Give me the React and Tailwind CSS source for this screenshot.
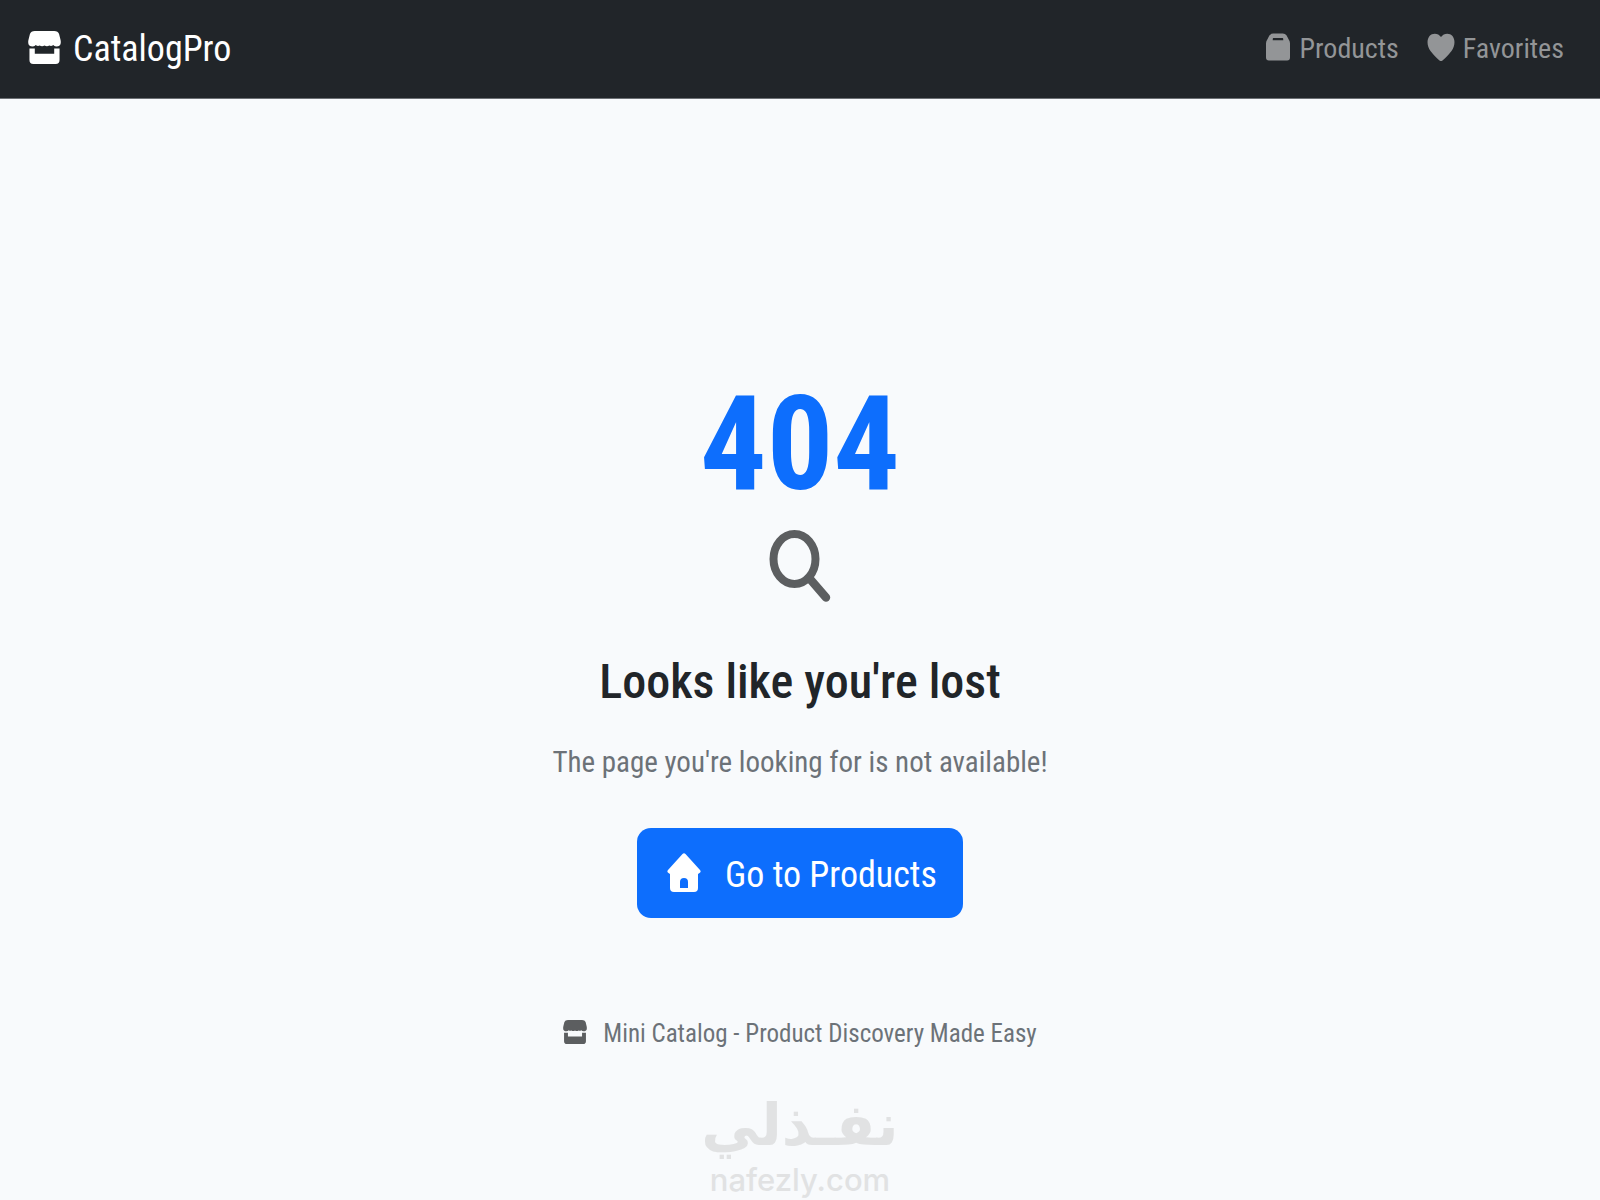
const Shop = ({ className }) => (
  <svg viewBox="0 0 34 34" className={className} fill="currentColor" aria-hidden="true">
    <path d="M7 0h20q4 0 5 3l1.500 6q1.500 7-4.500 7-2 0-3-1.500-2 1.500-4 .5-2.500 1.500-5 0-2.500 1.500-5 0-2 1-4-.5-1 1.500-3 1.500-6 0-4.500-7L2 3q1-3 5-3Z" />
    <path d="M1.500 18H7v5.500h20V18h5.500v12q0 4-4 4h-23q-4 0-4-4Z" />
  </svg>
);

const Bag = ({ className }) => (
  <svg viewBox="0 0 25 28" className={className} fill="currentColor" aria-hidden="true">
    <path fillRule="evenodd" d="M7.500 0h10q2.500 0 4 2l2 4q1.500 2 1.500 4v15q0 3-3 3H3q-3 0-3-3V10q0-2 1.500-4l2-4q1.500-2 4-2Zm0 4.500q-.5 0-.5 2.500h11q0-2.500-.5-2.500Z" />
  </svg>
);

const Heart = ({ className }) => (
  <svg viewBox="0 0 27 28" className={className} fill="currentColor" aria-hidden="true">
    <path d="M13.500 4C16 0 22-.5 25 3c3 4 2.500 10-1 15-3 4-6 7-9 9.500q-1.500 1-3 0C9 25 6 22 3 18-.5 13-1 7 2 3c3-3.500 9-3 11.500 1Z" />
  </svg>
);

const House = ({ className }) => (
  <svg viewBox="0 0 34 40" className={className} fill="currentColor" aria-hidden="true">
    <path fillRule="evenodd" d="M15.500 1q1.500-1.500 3 0L33 17q1.500 2-.5 3L31 21v14q0 4-4 4H7q-4 0-4-4V21l-1.500-1q-2-1-.5-3ZM13 35h8v-6q0-4-4-4t-4 4Z" />
  </svg>
);

const Magnifier = ({ className }) => (
  <svg viewBox="0 0 62 72" className={className} fill="none" stroke="currentColor" aria-hidden="true">
    <ellipse cx="25.500" cy="29" rx="21" ry="25" strokeWidth="8" />
    <path d="M41 49 57 67.500" strokeWidth="8.500" strokeLinecap="round" />
  </svg>
);

export default function App() {
  return (
    <div className="flex min-h-screen flex-col bg-[#f8fafc] font-['Roboto_Condensed','Open_Sans',sans-serif] text-[#212529]">
      <header className="flex items-center justify-between border-b border-[#6c7074] bg-[#212529] px-7 py-6">
        <a href="#home" className="flex items-center gap-3 text-[36px] leading-[50px] text-white">
          <Shop className="mb-1 size-[33px]" />
          CatalogPro
        </a>
        <nav className="flex items-center gap-7 pr-2 text-[28px] leading-10 text-[#939597]">
          <a href="#products" className="flex items-center gap-2.5">
            <Bag className="mb-1 h-7 w-6" />
            Products
          </a>
          <a href="#favorites" className="flex items-center gap-2">
            <Heart className="mb-1 h-7 w-7" />
            Favorites
          </a>
        </nav>
      </header>

      <main className="flex flex-1 flex-col items-center justify-end text-center">
        <h1 className="text-[132px] leading-[132px] font-bold text-[#0d6efd]">404</h1>
        <Magnifier className="mt-5 h-18 w-16 text-[#5c5e60]" />
        <h2 className="mt-13 text-[48px] leading-14 font-medium">Looks like you're lost</h2>
        <p className="mt-8 text-[29px] leading-10 text-[#6c7278]">The page you're looking for is not available!</p>
        <a
          href="#products"
          className="mt-[46px] flex h-[90px] items-center gap-6 rounded-[14px] bg-[#0d6efd] pr-[26px] pl-[30px] text-[36px] leading-10 text-white"
        >
          <House className="h-10 w-[34px]" />
          <span className="pt-1">Go to Products</span>
        </a>
      </main>

      <footer className="flex flex-col items-center pt-24">
        <p className="flex items-center gap-4 text-[25px] leading-10 text-[#6c7278]">
          <Shop className="mb-1 size-6 text-[#5c5e60]" />
          Mini Catalog - Product Discovery Made Easy
        </p>
        <div className="mt-8 flex flex-col items-center pb-1 text-[#e1e2e3]">
          <span lang="ar" dir="rtl" className="font-['DejaVu_Sans',sans-serif] text-[58px] leading-[78px] font-bold">
            نفـذلي
          </span>
          <span className="font-['Inter','Lato',sans-serif] text-[31px] leading-8 font-medium">nafezly.com</span>
        </div>
      </footer>
    </div>
  );
}
